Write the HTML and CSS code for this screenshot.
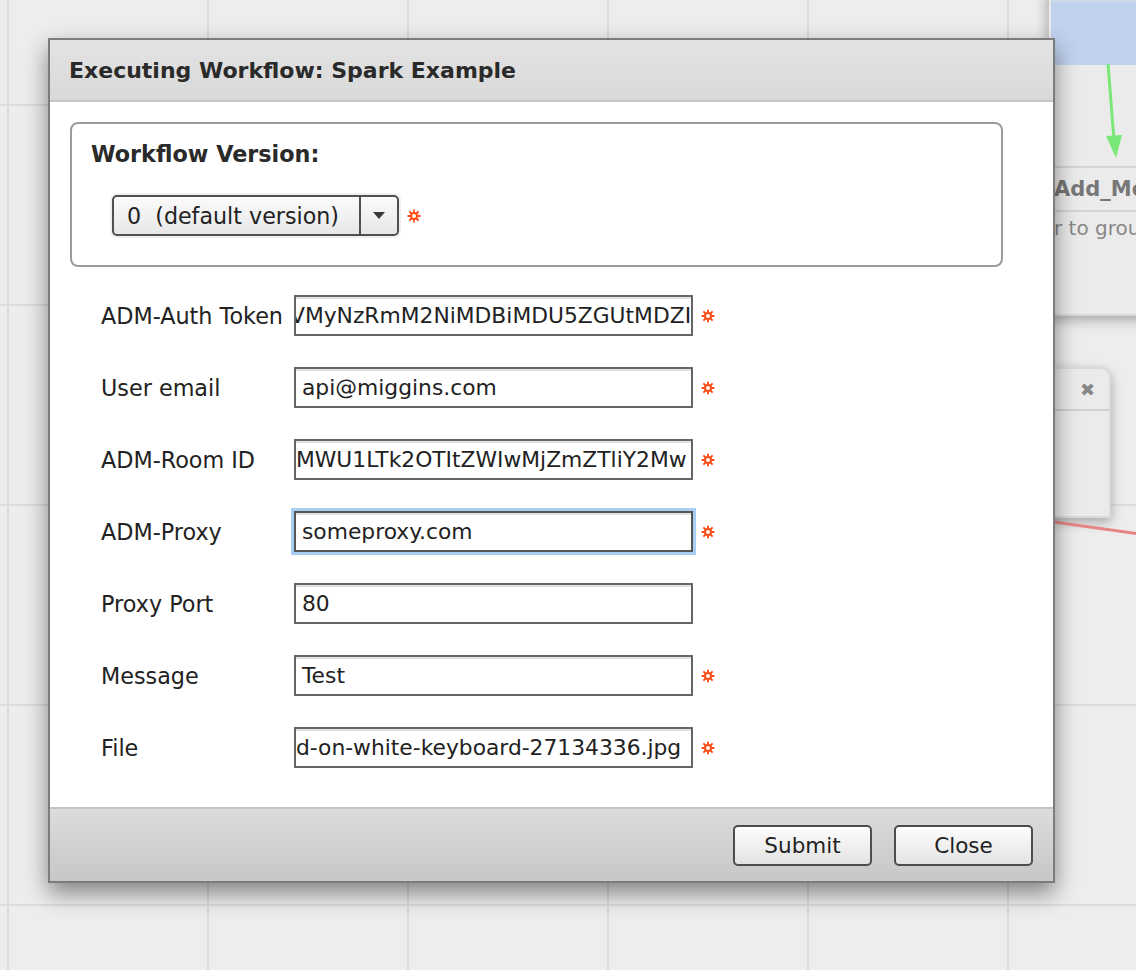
FILE: index.html
```html
<!DOCTYPE html>
<html lang="en">
<head>
  <meta charset="UTF-8" />
  <title>Executing Workflow</title>
  <link rel="stylesheet" href="styles.css">
</head>
<body>

<div class="canvas">
  <div class="node group-node">
    <div class="node-selected"></div>
    <div class="node-head">Add_Message</div>
    <div class="node-text">Drag a file or folder to group</div>
  </div>
  <div class="node small-node">
    <div class="small-head"><span class="node-close">&#10006;</span></div>
  </div>
  <svg class="links" width="1136" height="970" viewBox="0 0 1136 970">
    <line x1="1108" y1="64" x2="1114" y2="140" stroke="#79e879" stroke-width="3"/>
    <polygon points="1106,136 1122,135 1116,158" fill="#79e879"/>
    <line x1="1040" y1="520" x2="1140" y2="534" stroke="#e78585" stroke-width="3"/>
  </svg>
</div>

<div class="dialog">
  <div class="dialog-title">Executing Workflow: Spark Example</div>

  <div class="dialog-body">
    <div class="version-box">
      <div class="version-label">Workflow Version:</div>
      <div class="version-row">
        <div class="select">
          <span class="select-text">0&nbsp; (default version)</span>
          <span class="select-arrow"></span>
        </div>
        <svg class="req" width="14" height="14" viewBox="0 0 14 14"><circle cx="7" cy="7" r="3" fill="none" stroke="#ff4d12" stroke-width="2"/><path d="M7 0.5v3M7 10.5v3M0.5 7h3M10.5 7h3M2.4 2.4l2.1 2.1M9.5 9.5l2.1 2.1M11.6 2.4l-2.1 2.1M4.5 9.5l-2.1 2.1" stroke="#ff4d12" stroke-width="1.8"/></svg>
      </div>
    </div>

    <div class="form-rows">
      <div class="form-row">
        <span class="label">ADM-Auth Token</span>
        <div class="field clip"><span class="cut">VMyNzRmM2NiMDBiMDU5ZGUtMDZI</span></div>
        <svg class="req" width="14" height="14" viewBox="0 0 14 14"><circle cx="7" cy="7" r="3" fill="none" stroke="#ff4d12" stroke-width="2"/><path d="M7 0.5v3M7 10.5v3M0.5 7h3M10.5 7h3M2.4 2.4l2.1 2.1M9.5 9.5l2.1 2.1M11.6 2.4l-2.1 2.1M4.5 9.5l-2.1 2.1" stroke="#ff4d12" stroke-width="1.8"/></svg>
      </div>
      <div class="form-row">
        <span class="label">User email</span>
        <div class="field"><span>api@miggins.com</span></div>
        <svg class="req" width="14" height="14" viewBox="0 0 14 14"><circle cx="7" cy="7" r="3" fill="none" stroke="#ff4d12" stroke-width="2"/><path d="M7 0.5v3M7 10.5v3M0.5 7h3M10.5 7h3M2.4 2.4l2.1 2.1M9.5 9.5l2.1 2.1M11.6 2.4l-2.1 2.1M4.5 9.5l-2.1 2.1" stroke="#ff4d12" stroke-width="1.8"/></svg>
      </div>
      <div class="form-row">
        <span class="label">ADM-Room ID</span>
        <div class="field clip"><span>MWU1LTk2OTItZWIwMjZmZTliY2Mw</span></div>
        <svg class="req" width="14" height="14" viewBox="0 0 14 14"><circle cx="7" cy="7" r="3" fill="none" stroke="#ff4d12" stroke-width="2"/><path d="M7 0.5v3M7 10.5v3M0.5 7h3M10.5 7h3M2.4 2.4l2.1 2.1M9.5 9.5l2.1 2.1M11.6 2.4l-2.1 2.1M4.5 9.5l-2.1 2.1" stroke="#ff4d12" stroke-width="1.8"/></svg>
      </div>
      <div class="form-row">
        <span class="label">ADM-Proxy</span>
        <div class="field focused"><span>someproxy.com</span></div>
        <svg class="req" width="14" height="14" viewBox="0 0 14 14"><circle cx="7" cy="7" r="3" fill="none" stroke="#ff4d12" stroke-width="2"/><path d="M7 0.5v3M7 10.5v3M0.5 7h3M10.5 7h3M2.4 2.4l2.1 2.1M9.5 9.5l2.1 2.1M11.6 2.4l-2.1 2.1M4.5 9.5l-2.1 2.1" stroke="#ff4d12" stroke-width="1.8"/></svg>
      </div>
      <div class="form-row">
        <span class="label">Proxy Port</span>
        <div class="field"><span>80</span></div>
      </div>
      <div class="form-row">
        <span class="label">Message</span>
        <div class="field"><span>Test</span></div>
        <svg class="req" width="14" height="14" viewBox="0 0 14 14"><circle cx="7" cy="7" r="3" fill="none" stroke="#ff4d12" stroke-width="2"/><path d="M7 0.5v3M7 10.5v3M0.5 7h3M10.5 7h3M2.4 2.4l2.1 2.1M9.5 9.5l2.1 2.1M11.6 2.4l-2.1 2.1M4.5 9.5l-2.1 2.1" stroke="#ff4d12" stroke-width="1.8"/></svg>
      </div>
      <div class="form-row">
        <span class="label">File</span>
        <div class="field clip"><span>d-on-white-keyboard-27134336.jpg</span></div>
        <svg class="req" width="14" height="14" viewBox="0 0 14 14"><circle cx="7" cy="7" r="3" fill="none" stroke="#ff4d12" stroke-width="2"/><path d="M7 0.5v3M7 10.5v3M0.5 7h3M10.5 7h3M2.4 2.4l2.1 2.1M9.5 9.5l2.1 2.1M11.6 2.4l-2.1 2.1M4.5 9.5l-2.1 2.1" stroke="#ff4d12" stroke-width="1.8"/></svg>
      </div>
    </div>
  </div>

  <div class="dialog-footer">
    <button class="btn">Submit</button>
    <button class="btn">Close</button>
  </div>
</div>

</body>
</html>
```

FILE: styles.css
```css
body {
  margin: 0;
  width: 1136px;
  height: 970px;
  overflow: hidden;
  font-family: "DejaVu Sans", Verdana, sans-serif;
  color: #222;
  background-color: #ededed;
  background-image:
    linear-gradient(to right, #dcdcdc 2px, transparent 2px),
    linear-gradient(to bottom, #dcdcdc 2px, transparent 2px);
  background-size: 200px 200px;
  background-position: 7px 104px;
}
.canvas {
  position: relative;
  width: 1136px;
  height: 970px;
  overflow: hidden;
}
.node {
  position: absolute;
  background: #ebebeb;
  box-shadow: 0 4px 12px rgba(0, 0, 0, 0.3);
}
.group-node {
  left: 1047px;
  top: -10px;
  width: 120px;
  height: 324px;
  border-left: 2px solid #c8c8c8;
  border-bottom: 2px solid #d8d8d8;
}
.node-selected {
  height: 63px;
  margin-top: 10px;
  margin-left: 2px;
  background: #c1d2ee;
  border-top: 2px solid #cfd8e6;
}
.node-head {
  margin-top: 101px;
  height: 42px;
  line-height: 42px;
  padding-left: 5px;
  border-top: 2px solid #d4d4d4;
  border-bottom: 2px solid #d4d4d4;
  font-weight: bold;
  font-size: 21px;
  color: #777;
  white-space: nowrap;
}
.node-text {
  padding-top: 4px;
  text-indent: -182px;
  font-size: 20px;
  color: #888;
  white-space: nowrap;
}
.small-node {
  left: 990px;
  top: 367px;
  width: 117px;
  height: 147px;
  border: 2px solid #dadada;
  border-radius: 0 10px 0 0;
}
.small-head {
  height: 40px;
  border-bottom: 2px solid #d0d0d0;
  display: flex;
  justify-content: flex-end;
  align-items: center;
  padding-right: 14px;
}
.node-close {
  font-size: 18px;
  color: #888;
}
.links {
  position: absolute;
  left: 0;
  top: 0;
}

.dialog {
  position: absolute;
  left: 48px;
  top: 38px;
  width: 1003px;
  height: 841px;
  display: flex;
  flex-direction: column;
  background: white;
  border: 2px solid #7c7c7c;
  box-shadow: 0 10px 22px rgba(0, 0, 0, 0.45);
}
.dialog-title {
  height: 60px;
  line-height: 62px;
  padding-left: 19px;
  background: linear-gradient(#e3e3e3, #d9d9d9);
  border-bottom: 2px solid #c6c6c6;
  font-weight: bold;
  font-size: 22px;
  color: #2a2a2a;
}
.dialog-body {
  flex: 1;
  padding: 20px 0 0 20px;
}
.version-box {
  width: 929px;
  height: 141px;
  border: 2px solid #9b9b9b;
  border-radius: 8px;
}
.version-label {
  padding: 17px 0 0 19px;
  font-weight: bold;
  font-size: 22.3px;
  color: #2a2a2a;
}
.version-row {
  display: flex;
  align-items: center;
  gap: 8px;
  margin: 28px 0 0 40px;
}
.select {
  display: flex;
  width: 283px;
  height: 37px;
  border: 2px solid #505050;
  border-radius: 5px;
  background: linear-gradient(#fbfbfb, #e7e7e7);
  box-shadow: 0 0 0 2px #f0f0f0;
}
.select-text {
  flex: 1;
  padding-left: 13px;
  line-height: 38px;
  font-size: 22.2px;
  white-space: nowrap;
  border-right: 2px solid #505050;
}
.select-arrow {
  width: 36px;
  position: relative;
}
.select-arrow::after {
  content: "";
  position: absolute;
  left: 12px;
  top: 15px;
  border-left: 6px solid transparent;
  border-right: 6px solid transparent;
  border-top: 7px solid #3a3a3a;
}
.req {
  flex-shrink: 0;
}
.form-rows {
  display: flex;
  flex-direction: column;
  gap: 31px;
  margin-top: 28px;
}
.form-row {
  display: flex;
  align-items: center;
  height: 41px;
  padding-left: 31px;
}
.label {
  width: 193px;
  font-size: 22.3px;
  white-space: nowrap;
}
.field {
  display: flex;
  align-items: center;
  height: 37px;
  margin-right: 8px;
  padding: 0 6px;
  width: 383px;
  border: 2px solid #666;
  box-shadow: inset 0 2px 0 #e2e2e2;
  font-size: 21.8px;
  white-space: nowrap;
  overflow: hidden;
}
.field span {
  flex-shrink: 0;
}
.field.clip {
  padding: 0;
  width: 395px;
}
.field .cut {
  margin-left: -6px;
}
.field.focused {
  border-color: #555;
  box-shadow: 0 0 0 3px #a7cdf2, inset 0 2px 0 #e2e2e2;
}
.dialog-footer {
  height: 72px;
  display: flex;
  justify-content: flex-end;
  align-items: center;
  gap: 22px;
  padding-right: 20px;
  background: linear-gradient(#dcdcdc, #c7c7c7);
  border-top: 2px solid #c3c3c3;
}
.btn {
  width: 139px;
  height: 41px;
  font-family: "DejaVu Sans", Verdana, sans-serif;
  font-size: 21.5px;
  color: #222;
  border: 2px solid #4d4d4d;
  border-radius: 5px;
  background: linear-gradient(#fdfdfd, #e3e3e3);
}
```
